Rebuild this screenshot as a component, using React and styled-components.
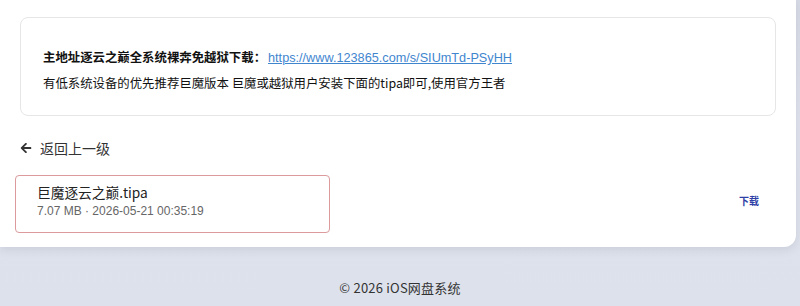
import React from "react";
import styled, { createGlobalStyle } from "styled-components";
import { FaArrowLeft } from "react-icons/fa";

const Global = createGlobalStyle`
  html, body { margin: 0; padding: 0; }
  body {
    font-family: "Noto Sans CJK SC", "Liberation Sans", sans-serif;
    background: linear-gradient(180deg, #d6dae5 0%, #e0e3ed 40%, #dde1eb 100%);
    min-height: 306px;
    overflow: hidden;
  }
`;

const Page = styled.div`
  display: flex;
  flex-direction: column;
  min-height: 306px;
`;

const Card = styled.main`
  background: #fff;
  margin-right: 4px;
  border-radius: 0 0 12px 0;
  box-shadow: 0 3px 8px rgba(60, 70, 100, 0.12);
  padding: 17px 20px 14px 20px;
  display: flex;
  flex-direction: column;
`;

const Notice = styled.section`
  border: 1px solid #e6e6e6;
  border-radius: 8px;
  padding: 28px 22px 21px 22px;
  display: flex;
  flex-direction: column;
  gap: 3px;
`;

const Line = styled.p`
  margin: 0;
  font-size: 12.4px;
  line-height: 22px;
  color: #111;
`;

const Bold = styled.strong`
  font-weight: 700;
`;

const Link = styled.a`
  font-family: "Liberation Sans", sans-serif;
  font-size: 12.7px;
  font-weight: 400;
  color: #3f86cf;
  text-decoration: underline;
  margin-left: 2px;
`;

const Back = styled.a`
  display: flex;
  align-items: center;
  gap: 8px;
  margin-top: 22px;
  font-size: 14px;
  line-height: 20px;
  color: #333;
  text-decoration: none;
`;

const Row = styled.div`
  margin-top: 17px;
  display: flex;
  align-items: center;
  justify-content: space-between;
  margin-left: -5px;
  padding-right: 17px;
`;

const FileBox = styled.div`
  width: 315px;
  box-sizing: border-box;
  border: 1px solid #dc9a9c;
  border-radius: 4px;
  padding: 7px 20px 11px 21px;
  display: flex;
  flex-direction: column;
`;

const FileName = styled.div`
  font-size: 13.7px;
  line-height: 19px;
  color: #222;
`;

const Meta = styled.div`
  font-family: "Liberation Sans", "Noto Sans CJK SC", sans-serif;
  font-size: 12px;
  line-height: 19px;
  color: #666;
`;

const Download = styled.a`
  font-size: 10px;
  font-weight: 700;
  color: #2e3fa6;
  text-decoration: none;
  margin-top: -8px;
`;

const Footer = styled.footer`
  flex: 1;
  display: flex;
  justify-content: center;
  padding-top: 31px;
  font-size: 13px;
  color: #333;
  letter-spacing: 0.2px;
`;

export default function App() {
  return (
    <Page>
      <Global />
      <Card>
        <Notice>
          <Line>
            <Bold>主地址逐云之巅全系统裸奔免越狱下载：</Bold>
            <Link href="#">https://www.123865.com/s/SIUmTd-PSyHH</Link>
          </Line>
          <Line>有低系统设备的优先推荐巨魔版本 巨魔或越狱用户安装下面的tipa即可,使用官方王者</Line>
        </Notice>
        <Back href="#">
          <FaArrowLeft size={12} />
          返回上一级
        </Back>
        <Row>
          <FileBox>
            <FileName>巨魔逐云之巅.tipa</FileName>
            <Meta>7.07 MB · 2026-05-21 00:35:19</Meta>
          </FileBox>
          <Download href="#">下载</Download>
        </Row>
      </Card>
      <Footer>© 2026 iOS网盘系统</Footer>
    </Page>
  );
}
